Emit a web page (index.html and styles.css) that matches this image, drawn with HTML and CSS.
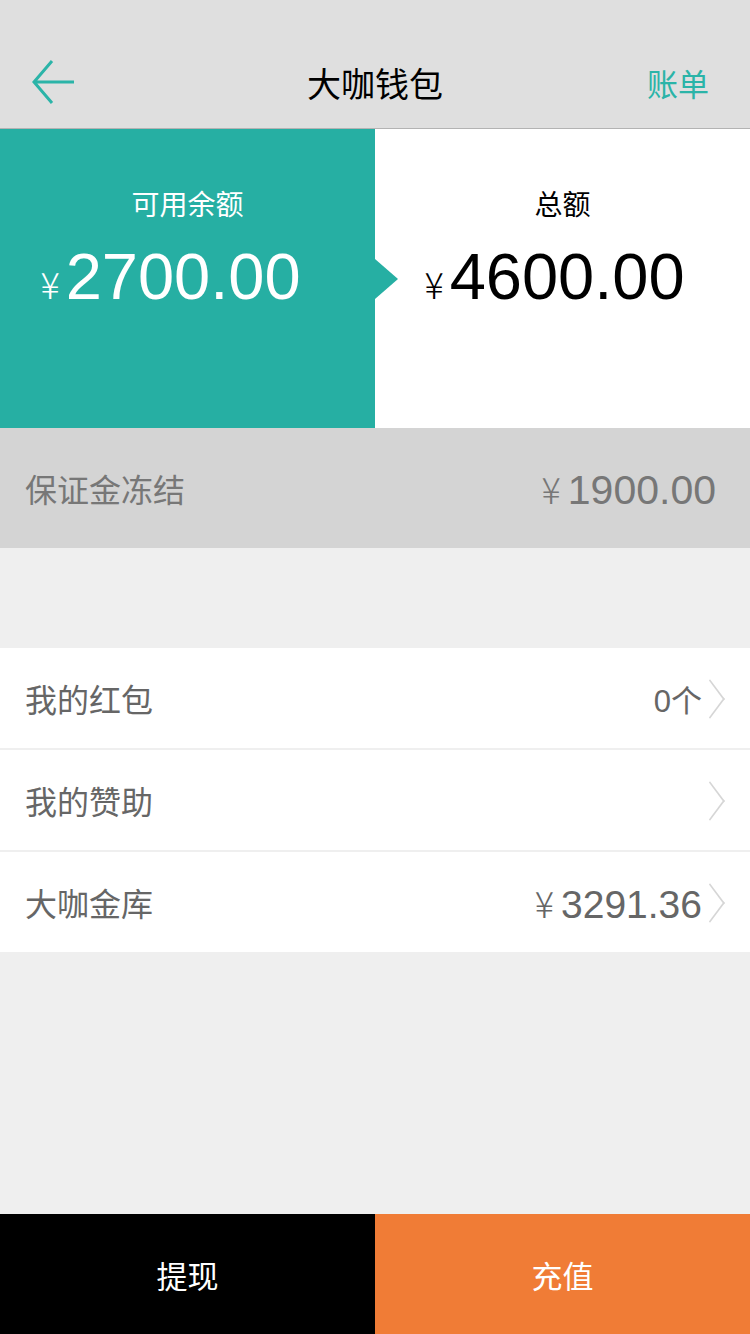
FILE: index.html
```html
<!DOCTYPE html>
<html lang="zh-CN">
<head>
<meta charset="utf-8">
<link rel="stylesheet" href="styles.css">
</head>
<body>
<div class="page">
  <header class="nav">
    <div class="nav-back">
      <svg width="44" height="44" viewBox="0 0 44 44"><path d="M21 1 L3 22 L21 43 M3 22 H43" fill="none" stroke="#2bb4a8" stroke-width="3"/></svg>
    </div>
    <div class="nav-title">大咖钱包</div>
    <div class="nav-right">账单</div>
  </header>

  <section class="summary">
    <div class="panel panel-avail">
      <div class="panel-label">可用余额</div>
      <div class="panel-amount"><span class="yen">¥</span><span class="num">2700.00</span></div>
      <div class="notch"></div>
    </div>
    <div class="panel panel-total">
      <div class="panel-label">总额</div>
      <div class="panel-amount"><span class="yen">¥</span><span class="num">4600.00</span></div>
    </div>
  </section>

  <section class="frozen">
    <span class="frozen-label">保证金冻结</span>
    <span class="frozen-value"><span class="yen-s">¥</span>1900.00</span>
  </section>

  <div class="spacer"></div>

  <ul class="list">
    <li class="row"><span class="row-label">我的红包</span><span class="row-value">0个</span><span class="chev"></span></li>
    <li class="row"><span class="row-label">我的赞助</span><span class="row-value"></span><span class="chev"></span></li>
    <li class="row"><span class="row-label">大咖金库</span><span class="row-value row-money"><span class="yen-s">¥</span>3291.36</span><span class="chev"></span></li>
  </ul>

  <div class="fill"></div>

  <footer class="actions">
    <button class="btn btn-withdraw">提现</button>
    <button class="btn btn-recharge">充值</button>
  </footer>
</div>
</body>
</html>
```

FILE: styles.css
```css
* { box-sizing: border-box; margin: 0; padding: 0; }
html, body { width: 750px; height: 1334px; }
body {
  font-family: "Liberation Sans", "Noto Sans CJK SC", sans-serif;
  background: #efefef;
  overflow: hidden;
}
.page {
  width: 750px;
  height: 1334px;
  display: flex;
  flex-direction: column;
}
.nav {
  height: 129px;
  background: #dfdfdf;
  border-bottom: 1px solid #b3b3b3;
  display: flex;
  align-items: center;
  padding-top: 36px;
}
.nav-back {
  width: 140px;
  padding-left: 31px;
  display: flex;
  align-items: center;
}
.nav-back svg { display: block; }
.nav-title {
  flex: 1;
  text-align: center;
  font-size: 34px;
  color: #000;
}
.nav-right {
  width: 140px;
  text-align: right;
  padding-right: 41px;
  font-size: 31px;
  color: #2bb4a8;
}
.summary {
  display: flex;
  height: 299px;
}
.panel {
  width: 375px;
  display: flex;
  flex-direction: column;
  align-items: center;
  position: relative;
}
.panel-avail { background: #26afa3; color: #fff; }
.panel-total { background: #fff; color: #000; }
.panel-label {
  margin-top: 58px;
  font-size: 28px;
  line-height: 38px;
}
.panel-amount {
  margin-top: 16px;
  display: flex;
  align-items: baseline;
  line-height: 72px;
}
.yen {
  font-family: "Noto Sans CJK SC", sans-serif;
  font-size: 36px;
  font-weight: 300;
  margin-right: 6px;
}
.num { font-size: 65px; }
.panel-avail .panel-amount { margin-left: -34px; }
.panel-total .panel-amount { margin-left: -16px; }
.notch {
  position: absolute;
  right: -23px;
  top: 130px;
  width: 0;
  height: 0;
  border-top: 20px solid transparent;
  border-bottom: 20px solid transparent;
  border-left: 23px solid #26afa3;
  z-index: 2;
}
.frozen {
  height: 120px;
  background: #d4d4d4;
  display: flex;
  align-items: center;
  justify-content: space-between;
  padding: 0 34px 0 25px;
  color: #777;
  font-size: 32px;
}
.frozen-value { font-size: 41px; display: flex; align-items: baseline; }
.yen-s {
  font-family: "Noto Sans CJK SC", sans-serif;
  font-weight: 300;
  font-size: 36px;
  margin-right: 7px;
}
.spacer { height: 100px; }
.list { list-style: none; }
.row {
  height: 100px;
  background: #fff;
  display: flex;
  align-items: center;
  padding: 0 23px 0 25px;
  color: #666;
  margin-bottom: 2px;
}
.row-label { font-size: 32px; flex: 1; }
.row-value { font-size: 31px; }
.row-money { font-size: 39px; display: flex; align-items: baseline; }
.chev {
  width: 22px;
  height: 36px;
  margin-left: 3px;
  position: relative;
}
.chev::before {
  content: "";
  position: absolute;
  left: -9px;
  top: 5px;
  width: 26px;
  height: 26px;
  border-top: 2px solid #d6d6d6;
  border-right: 2px solid #d6d6d6;
  transform: scaleX(0.75) rotate(45deg);
}
.fill { flex: 1; }
.actions {
  display: flex;
  height: 120px;
}
.btn {
  flex: 1;
  border: none;
  font-family: inherit;
  font-size: 31px;
  color: #fff;
}
.btn-withdraw { background: #000; }
.btn-recharge { background: #f07c36; }
```
